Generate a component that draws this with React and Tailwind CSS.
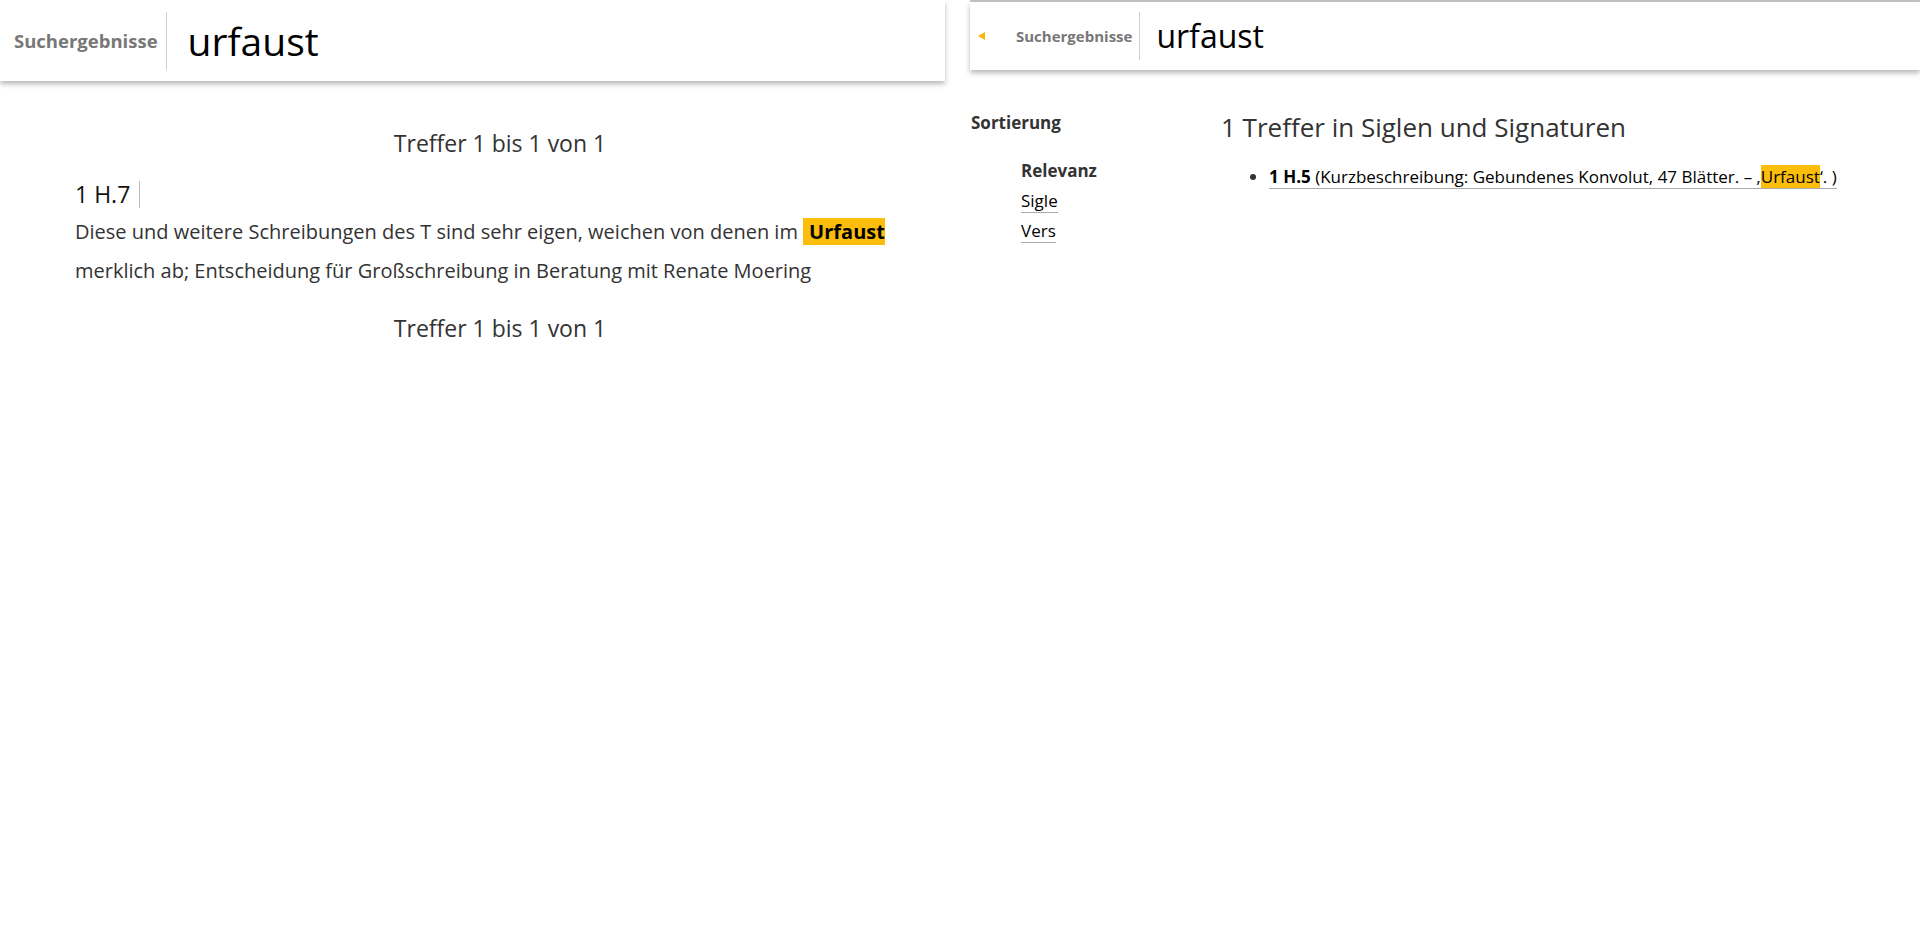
import React from "react";

function Header({ small }) {
  if (small) {
    return (
      <header className="h-[68px] flex items-center bg-white shadow-[0_3px_5px_rgba(0,0,0,0.28)] relative z-10">
        <span className="ml-[8px] w-0 h-0 border-y-[4px] border-y-transparent border-r-[7px] border-r-[#fbb800]" />
        <span className="pl-[31px] pr-[7px] text-[15px] font-bold text-[#777]">
          Suchergebnisse
        </span>
        <span className="h-[48px] border-l border-[#d0d0d0]" />
        <span className="pl-[16px] text-[32px] text-black leading-none">urfaust</span>
      </header>
    );
  }
  return (
    <header className="h-[81px] flex items-center bg-white shadow-[0_3px_5px_rgba(0,0,0,0.28)] relative z-10">
      <span className="pl-[14px] pr-[8px] text-[18.5px] font-bold text-[#777]">
        Suchergebnisse
      </span>
      <span className="h-[58px] border-l border-[#d0d0d0]" />
      <span className="pl-[21px] text-[39px] text-black leading-none">urfaust</span>
    </header>
  );
}

function App() {
  return (
    <div className="w-[1920px] h-[935px] flex bg-white text-[#333] font-['Open_Sans',sans-serif] overflow-hidden">
      {/* linke Ansicht */}
      <div className="w-[945px] shrink-0">
        <Header />
        <main className="pl-[75px] pr-[20px]">
          <p className="mt-[46px] text-center text-[23px] leading-[32px]">
            Treffer 1 bis 1 von 1
          </p>
          <div className="mt-[20px] flex items-center text-[23px] leading-[30px] text-[#111]">
            1 H.7
            <span className="ml-[9px] h-[27px] border-l border-[#bbb]" />
          </div>
          <p className="mt-[3px] text-[20px] leading-[39px]">
            Diese und weitere Schreibungen des T sind sehr eigen, weichen von denen im{" "}
            <span className="bg-[#fdbd0b] pl-[6px] font-bold text-black">Urfaust</span>{" "}
            merklich ab; Entscheidung für Großschreibung in Beratung mit Renate Moering
          </p>
          <p className="mt-[22px] text-center text-[23px] leading-[32px]">
            Treffer 1 bis 1 von 1
          </p>
        </main>
      </div>

      {/* rechte Ansicht */}
      <div className="ml-[25px] flex-1 border-t-2 border-[#c4c4c4]">
        <Header small />
        <div className="flex">
          <aside className="w-[251px] shrink-0 pl-[1px] pt-[41px]">
            <h3 className="text-[17px] font-bold leading-[24px]">Sortierung</h3>
            <ul className="mt-[21px] pl-[50px] text-[17px] leading-[30px]">
              <li className="font-bold">Relevanz</li>
              <li>
                <a href="#" className="text-black border-b border-[#aaa]">Sigle</a>
              </li>
              <li>
                <a href="#" className="text-black border-b border-[#aaa]">Vers</a>
              </li>
            </ul>
          </aside>
          <section className="pt-[39px]">
            <h2 className="text-[26px] leading-[36px] text-[#333]">
              1 Treffer in Siglen und Signaturen
            </h2>
            <ul className="mt-[20px] pl-[48px] list-disc text-[17px] leading-[24px]">
              <li>
                <a href="#" className="text-black border-b border-[#aaa]">
                  <b>1 H.5</b> (Kurzbeschreibung: Gebundenes Konvolut, 47 Blätter. – ‚
                  <span className="bg-[#fdbd0b]">Urfaust</span>‘. )
                </a>
              </li>
            </ul>
          </section>
        </div>
      </div>
    </div>
  );
}

export default App;
